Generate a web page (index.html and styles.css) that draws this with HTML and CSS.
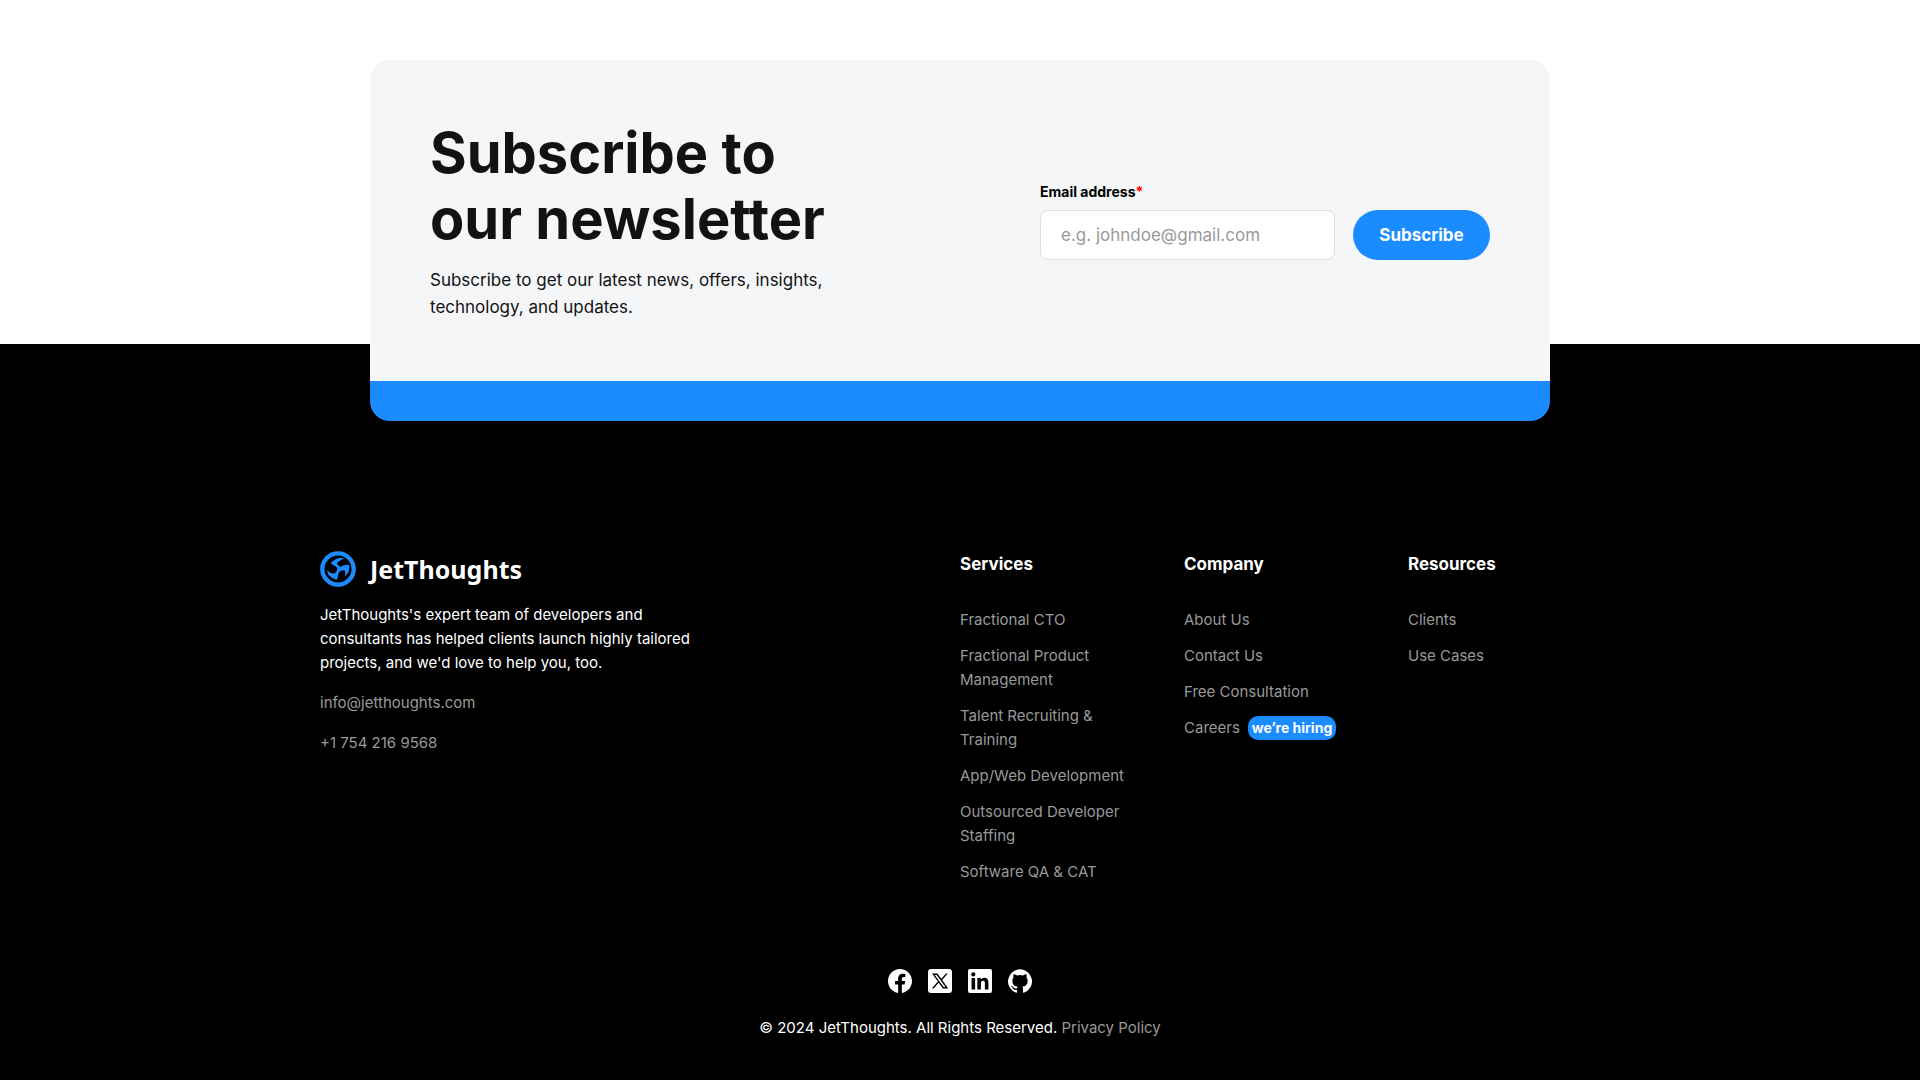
FILE: index.html
```html
<!DOCTYPE html>
<html lang="en">
<head>
<meta charset="utf-8">
<meta name="viewport" content="width=device-width, initial-scale=1">
<title>JetThoughts</title>
<link rel="stylesheet" href="styles.css">
</head>
<body>
<section class="newsletter">
  <div class="card">
    <div class="card-body">
      <div class="intro">
        <h2>Subscribe to<br>our newsletter</h2>
        <p>Subscribe to get our latest news, offers, insights,<br>technology, and updates.</p>
      </div>
      <form class="signup">
        <label for="email">Email address<span class="required">*</span></label>
        <div class="signup-row">
          <input id="email" type="email" placeholder="e.g. johndoe@gmail.com" required>
          <button type="submit">Subscribe</button>
        </div>
      </form>
    </div>
  </div>
</section>
<footer class="footer">
  <div class="footer-grid">
    <div class="about">
      <a class="logo" href="#">
        <svg width="36" height="36" viewBox="0 0 108 108" aria-hidden="true">
          <circle cx="54" cy="54" r="47" fill="none" stroke="#1a8cff" stroke-width="13"/>
          <path fill="#1a8cff" d="M72 22C57 16 40 27 32 37Q42 44 52 50Q52 62 45 67Q33 70 21 58Q24 80 50 87Q54 78 56 66Q61 56 73 58Q78 64 74 77Q91 64 88 42Q73 40 61 48Q55 44 50 37Q61 27 72 22Z"/>
        </svg>
        <span>JetThoughts</span>
      </a>
      <p>JetThoughts's expert team of developers and consultants has helped clients launch highly tailored projects, and we'd love to help you, too.</p>
      <a href="mailto:info@jetthoughts.com">info@jetthoughts.com</a>
      <a href="tel:+17542169568">+1 754 216 9568</a>
    </div>
    <nav class="column" aria-label="Services">
      <h3>Services</h3>
      <ul>
        <li><a href="#">Fractional CTO</a></li>
        <li><a href="#">Fractional Product Management</a></li>
        <li><a href="#">Talent Recruiting &amp; Training</a></li>
        <li><a href="#">App/Web Development</a></li>
        <li><a href="#">Outsourced Developer Staffing</a></li>
        <li><a href="#">Software QA &amp; CAT</a></li>
      </ul>
    </nav>
    <nav class="column" aria-label="Company">
      <h3>Company</h3>
      <ul>
        <li><a href="#">About Us</a></li>
        <li><a href="#">Contact Us</a></li>
        <li><a href="#">Free Consultation</a></li>
        <li class="careers"><a href="#">Careers</a><span class="badge">we’re hiring</span></li>
      </ul>
    </nav>
    <nav class="column" aria-label="Resources">
      <h3>Resources</h3>
      <ul>
        <li><a href="#">Clients</a></li>
        <li><a href="#">Use Cases</a></li>
      </ul>
    </nav>
  </div>
  <div class="social">
    <a href="#" aria-label="Facebook"><svg width="24" height="24" viewBox="0 0 24 24"><path fill="#fff" d="M24 12.07C24 5.4 18.63 0 12 0S0 5.4 0 12.07C0 18.1 4.39 23.1 10.13 24v-8.44H7.08v-3.49h3.05V9.41c0-3.02 1.79-4.69 4.53-4.69 1.31 0 2.68.24 2.68.24v2.97h-1.51c-1.49 0-1.96.93-1.96 1.89v2.25h3.33l-.53 3.49h-2.8V24C19.61 23.1 24 18.1 24 12.07z"/></svg></a>
    <a href="#" aria-label="X"><svg width="24" height="24" viewBox="0 0 24 24"><rect width="24" height="24" rx="3" fill="#fff"/><path d="M4 4.5h5.4l3.9 5.3 4.7-5.3h1.8l-5.7 6.4 6.2 8.6h-5.4l-4.2-5.8-5.1 5.8H3.8l6.1-6.9zM6.700 5.900l8.900 12.200h1.900L8.700 5.900z"/></svg></a>
    <a href="#" aria-label="LinkedIn"><svg width="24" height="24" viewBox="0 0 24 24"><rect width="24" height="24" rx="2" fill="#fff"/><circle cx="5.300" cy="5.400" r="2.060"/><path d="M3.560 9h3.560v11.450H3.560zM9.350 9h3.410v1.560h.05c.48-.9 1.640-1.850 3.370-1.850 3.600 0 4.270 2.370 4.270 5.460v6.280h-3.560v-5.570c0-1.330-.03-3.040-1.850-3.040-1.850 0-2.140 1.450-2.140 2.940v5.670H9.350z"/></svg></a>
    <a href="#" aria-label="GitHub"><svg width="24" height="24" viewBox="0 0 24 24"><path fill="#fff" d="M12 .3a12 12 0 0 0-3.790 23.390c.6.110.820-.260.820-.580v-2.230c-3.340.730-4.040-1.420-4.040-1.420-.550-1.390-1.330-1.760-1.330-1.760-1.090-.740.080-.730.080-.730 1.210.080 1.840 1.240 1.840 1.240 1.070 1.830 2.810 1.300 3.490 1 .110-.780.420-1.310.760-1.610-2.660-.300-5.470-1.330-5.470-5.930 0-1.310.470-2.380 1.240-3.220-.130-.300-.540-1.520.110-3.180 0 0 1.010-.320 3.300 1.230a11.500 11.500 0 0 1 6.010 0c2.290-1.550 3.300-1.230 3.300-1.230.650 1.660.240 2.880.120 3.180.770.840 1.230 1.910 1.230 3.220 0 4.610-2.800 5.620-5.480 5.920.430.370.820 1.100.820 2.220v3.290c0 .320.210.700.820.580A12 12 0 0 0 12 .3z"/></svg></a>
  </div>
  <p class="copyright">© 2024 JetThoughts. All Rights Reserved. <a href="#">Privacy Policy</a></p>
</footer>
</body>
</html>
```
FILE: styles.css
```css
* { box-sizing: border-box; }
body {
  margin: 0;
  background: #fff;
  color: #121212;
  font: 15px/24px Inter, "Liberation Sans", sans-serif;
}
h2, h3, p, ul { margin: 0; padding: 0; }
ul { list-style: none; }
a { color: #999; text-decoration: none; }

.newsletter { padding: 60px 20px 0; }
.card {
  position: relative;
  max-width: 1180px;
  margin: 0 auto -77px;
  overflow: hidden;
  border-bottom: 40px solid #1a8cff;
  border-radius: 20px;
  background: #f5f6f8;
}
.card-body {
  display: flex;
  flex-wrap: wrap;
  align-items: center;
  justify-content: space-between;
  gap: 40px;
  padding: 60px;
}
.intro { display: grid; gap: 15px; }
.intro h2 { font-size: 56px; line-height: 66px; font-weight: 700; }
.intro p { font-size: 17px; line-height: 27px; }
.signup {
  display: grid;
  grid-template-columns: minmax(0, 1fr);
  gap: 7px;
  width: 450px;
}
.signup label { color: #000; font-size: 14px; line-height: 22px; font-weight: 700; }
.required { color: #f00; }
.signup-row { display: flex; gap: 18px; }
.signup input {
  flex: 1;
  min-width: 0;
  height: 50px;
  padding: 0 20px;
  border: 1px solid #ddd;
  border-radius: 8px;
  background: #fff;
  font: inherit;
  font-size: 17px;
}
.signup input::placeholder { color: #999; }
.signup button {
  width: 137px;
  height: 50px;
  border: 0;
  border-radius: 25px;
  background: #1a8cff;
  color: #fff;
  font: inherit;
  font-size: 17px;
  font-weight: 700;
}

.footer { padding: 207px 20px 40px; background: #000; color: #fff; }
.footer-grid {
  display: grid;
  grid-template-columns: 1fr 224px 224px 192px;
  max-width: 1280px;
  margin: 0 auto;
}
.about { display: grid; gap: 16px; align-content: start; justify-items: start; }
.about p { max-width: 384px; }
.logo {
  display: flex;
  align-items: center;
  gap: 14px;
  height: 36px;
  color: #fff;
  font: 700 25px/34px "Noto Sans", sans-serif;
}
.column { padding-right: 32px; }
.column:last-child { padding-right: 0; }
.column h3 { margin-bottom: 30px; font-size: 17px; line-height: 27px; font-weight: 700; }
.column ul { display: grid; gap: 12px; }
.careers { display: flex; gap: 8px; margin-right: -32px; }
.badge {
  padding: 0 4px;
  border-radius: 10px;
  background: #1a8cff;
  font-size: 14px;
  font-weight: 700;
}
.social { display: flex; justify-content: center; gap: 16px; margin-top: 85px; }
.social svg { display: block; }
.copyright { margin-top: 23px; text-align: center; }
```
